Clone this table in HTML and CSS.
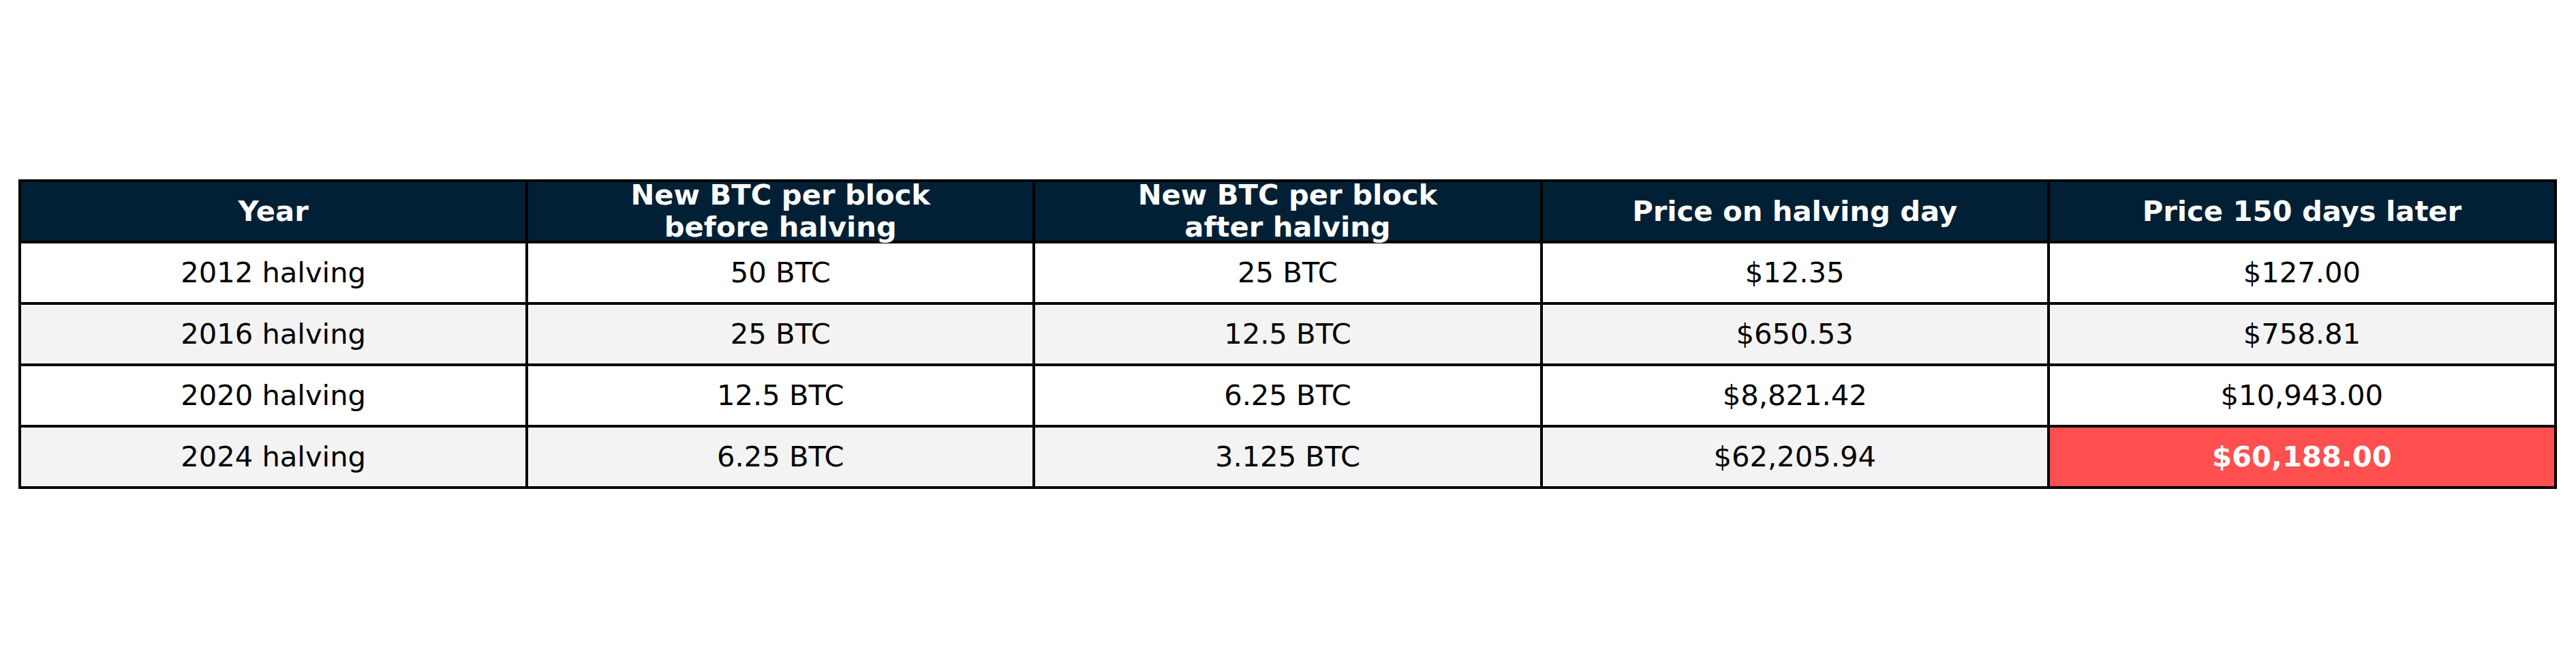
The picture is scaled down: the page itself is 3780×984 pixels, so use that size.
FILE: index.html
```html
<!DOCTYPE html>
<html lang="en">
<head>
<meta charset="utf-8">
<title>Bitcoin halvings</title>
<link rel="stylesheet" href="styles.css">
</head>
<body>
<div class="page">
  <table class="halving-table">
    <thead>
      <tr>
        <th><div class="head-label">Year</div></th>
        <th><div class="head-label">New BTC per block<br>before halving</div></th>
        <th><div class="head-label">New BTC per block<br>after halving</div></th>
        <th><div class="head-label">Price on halving day</div></th>
        <th><div class="head-label">Price 150 days later</div></th>
      </tr>
    </thead>
    <tbody>
      <tr>
        <td>2012 halving</td>
        <td>50 BTC</td>
        <td>25 BTC</td>
        <td>$12.35</td>
        <td>$127.00</td>
      </tr>
      <tr class="alt">
        <td>2016 halving</td>
        <td>25 BTC</td>
        <td>12.5 BTC</td>
        <td>$650.53</td>
        <td>$758.81</td>
      </tr>
      <tr>
        <td>2020 halving</td>
        <td>12.5 BTC</td>
        <td>6.25 BTC</td>
        <td>$8,821.42</td>
        <td>$10,943.00</td>
      </tr>
      <tr class="alt">
        <td>2024 halving</td>
        <td>6.25 BTC</td>
        <td>3.125 BTC</td>
        <td>$62,205.94</td>
        <td class="highlight">$60,188.00</td>
      </tr>
    </tbody>
  </table>
</div>
</body>
</html>
```

FILE: styles.css
```css
html, body {
  margin: 0;
  padding: 0;
  background: #ffffff;
}

.page {
  padding: 263px 0 0 27px;
}

.halving-table {
  border-collapse: collapse;
  table-layout: fixed;
  width: 3725px;
  font-family: "DejaVu Sans", "Liberation Sans", sans-serif;
  font-size: 41.67px;
  color: #000000;
}

.halving-table th,
.halving-table td {
  border: 4px solid #000000;
  padding: 0;
  text-align: center;
  vertical-align: middle;
  white-space: nowrap;
  overflow: visible;
}

.halving-table th {
  height: 86px;
  background: #022035;
  color: #ffffff;
  font-weight: bold;
  line-height: 47px;
}

.head-label {
  margin: -5px 0 -3px;
}

.halving-table td {
  height: 86px;
  background: #ffffff;
  line-height: 48px;
}

.halving-table tr.alt td {
  background: #f3f3f3;
}

.halving-table tr td.highlight {
  background: #ff4f4f;
  color: #ffffff;
  font-weight: bold;
}
```
